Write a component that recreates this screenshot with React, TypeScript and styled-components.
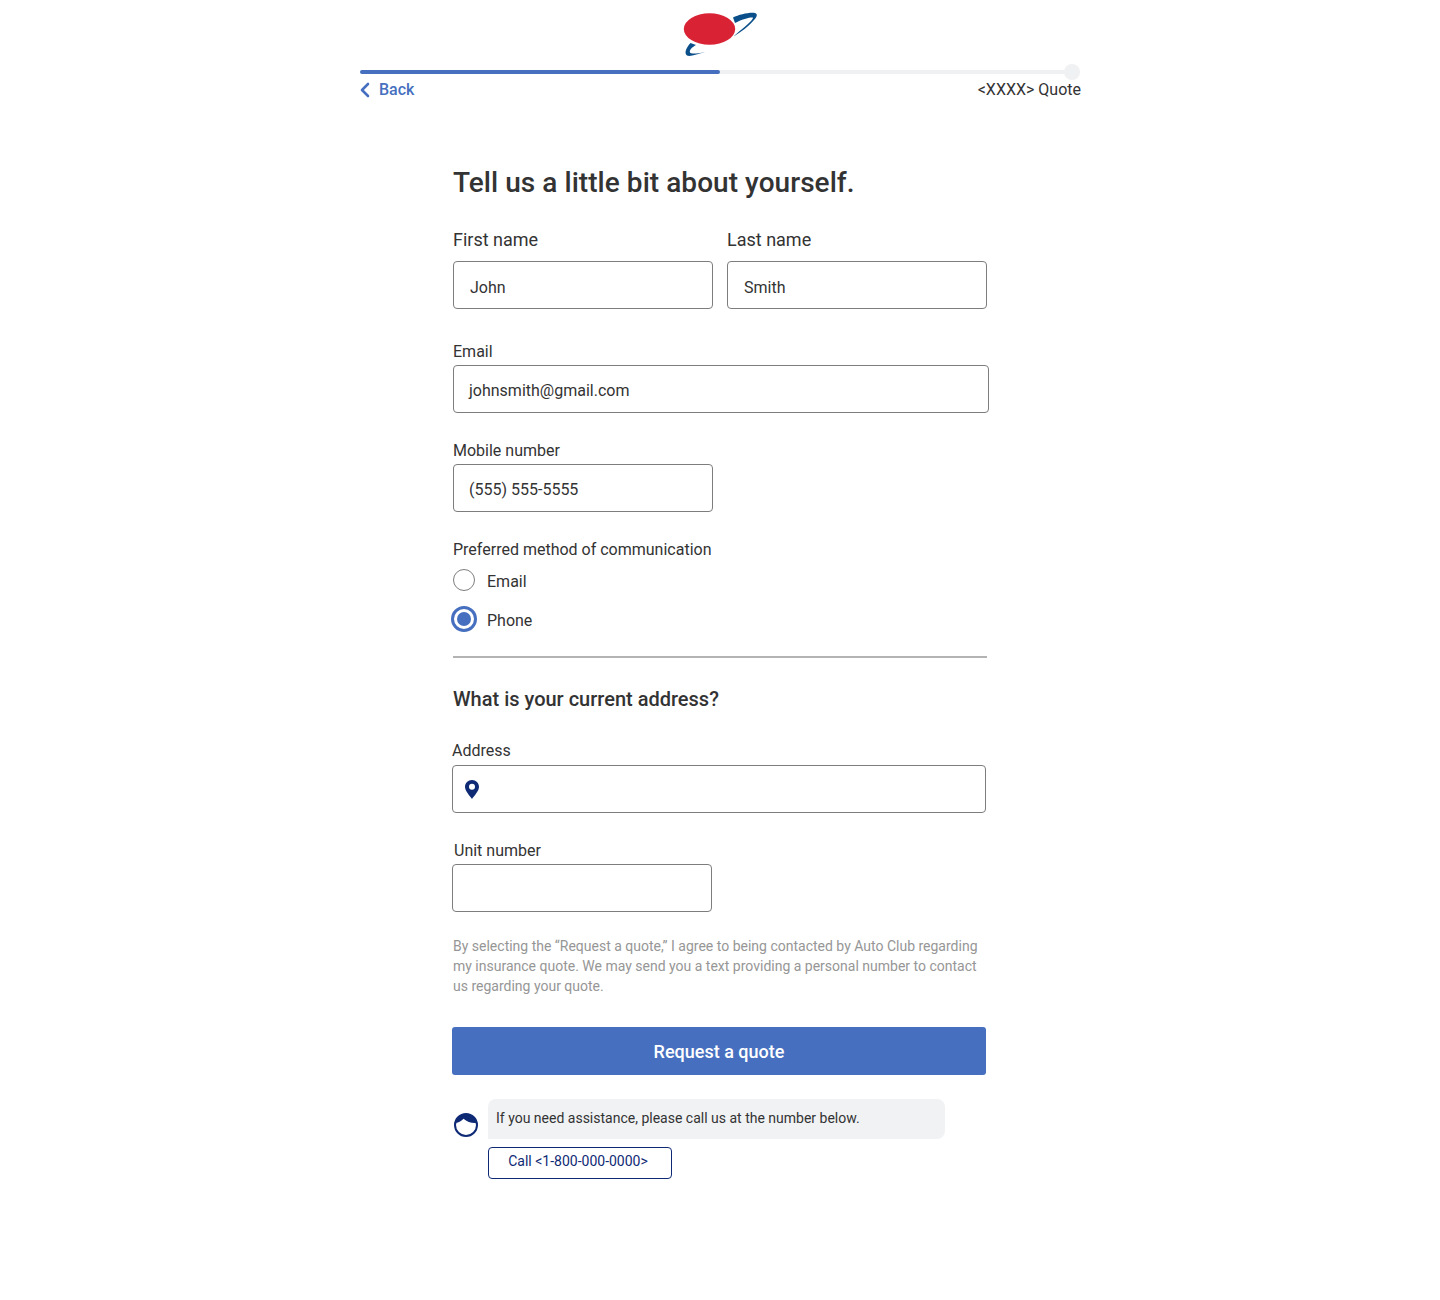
import React from "react";
import styled, { createGlobalStyle } from "styled-components";

const Global = createGlobalStyle`
  html, body { margin: 0; padding: 0; background: #fff; }
  body { font-family: Roboto, "Liberation Sans", sans-serif; color: #333; -webkit-font-smoothing: antialiased; }
`;

const Page = styled.div`
  width: 1440px;
  height: 1300px;
  display: flex;
  flex-direction: column;
  align-items: center;
`;
const Header = styled.header`
  width: 721px;
  margin-left: 1px;
  display: flex;
  flex-direction: column;
`;
const LogoRow = styled.div`
  height: 70px;
  display: flex;
  justify-content: center;
  padding-top: 12px;
  box-sizing: border-box;
`;
const Progress = styled.div`
  position: relative;
  width: 720px;
  height: 4px;
  border-radius: 2px;
  background: #f0f1f2;
`;
const ProgressFill = styled.div<{ $pct: number }>`
  width: ${(p) => p.$pct}%;
  height: 100%;
  border-radius: 2px;
  background: #4670bf;
`;
const ProgressEnd = styled.span`
  position: absolute;
  right: 0;
  top: -6px;
  width: 16px;
  height: 16px;
  border-radius: 50%;
  background: #f0f1f2;
`;
const NavRow = styled.div`
  display: flex;
  justify-content: space-between;
  align-items: center;
  height: 22px;
  margin-top: 5px;
  font-size: 16px;
  line-height: 22px;
`;
const BackLink = styled.a`
  display: flex;
  align-items: center;
  gap: 9px;
  color: #4670bf;
  font-weight: 500;
`;
const QuoteLabel = styled.span`
  color: #333;
`;
const Form = styled.main`
  width: 536px;
  margin-left: 2px;
  display: flex;
  flex-direction: column;
  align-items: flex-start;
`;
const Title = styled.h1`
  margin: 64px 0 0;
  font-size: 28px;
  line-height: 36px;
  font-weight: 500;
  letter-spacing: 0.05px;
  color: #333;
`;
const NameRow = styled.div`
  margin-top: 29px;
  display: flex;
  gap: 14px;
`;
const Field = styled.div<{ $top?: number; $shift?: number }>`
  display: flex;
  flex-direction: column;
  margin-top: ${(p) => p.$top ?? 0}px;
  margin-left: ${(p) => p.$shift ?? 0}px;
`;
const Label = styled.label<{ $big?: boolean; $shift?: number }>`
  display: block;
  font-size: ${(p) => (p.$big ? 18 : 16)}px;
  line-height: 20px;
  height: 20px;
  margin-left: ${(p) => p.$shift ?? 0}px;
  color: #333;
`;
const Box = styled.div<{ $w: number; $top?: number; $pad?: number; $drop?: number }>`
  width: ${(p) => p.$w}px;
  height: 48px;
  margin-top: ${(p) => p.$top ?? 3}px;
  padding-left: ${(p) => p.$pad ?? 15}px;
  padding-top: ${(p) => p.$drop ?? 0}px;
  box-sizing: border-box;
  border: 1px solid #7d7d7d;
  border-radius: 4px;
  display: flex;
  align-items: center;
  font-size: 16px;
  color: #333;
`;
const Radios = styled.div`
  margin-top: 8px;
  display: flex;
  flex-direction: column;
  gap: 15px;
`;
const RadioRow = styled.div<{ $on?: boolean }>`
  display: flex;
  align-items: center;
  height: ${(p) => (p.$on ? 26 : 23)}px;
  font-size: 16px;
  gap: ${(p) => (p.$on ? 10 : 12)}px;
  margin-left: ${(p) => (p.$on ? -2 : 0)}px;
`;
const RadioText = styled.span<{ $drop: number }>`
  padding-top: ${(p) => p.$drop}px;
`;
const RadioOff = styled.span`
  width: 22px;
  height: 22px;
  box-sizing: border-box;
  border: 1px solid #7d7d7d;
  border-radius: 50%;
`;
const RadioOn = styled.span`
  width: 26px;
  height: 26px;
  box-sizing: border-box;
  border: 3px solid #4670bf;
  border-radius: 50%;
  display: flex;
  align-items: center;
  justify-content: center;
  &::after {
    content: "";
    width: 14px;
    height: 14px;
    border-radius: 50%;
    background: #4670bf;
  }
`;
const Divider = styled.hr`
  width: 534px;
  height: 2px;
  margin: 24px 0 0;
  border: 0;
  background: #b3b3b3;
`;
const Subtitle = styled.h2`
  margin: 28px 0 0;
  font-size: 20px;
  line-height: 26px;
  font-weight: 500;
  color: #333;
`;
const Legal = styled.p`
  width: 534px;
  margin: 24px 0 0;
  font-size: 14px;
  line-height: 20px;
  color: #969696;
`;
const PrimaryButton = styled.button`
  width: 534px;
  height: 48px;
  margin: 31px 0 0 -1px;
  border: 0;
  border-radius: 3px;
  background: #4670bf;
  color: #fff;
  font-family: inherit;
  font-size: 18px;
  font-weight: 500;
`;
const Chat = styled.div`
  margin: 24px 0 0 1px;
  display: grid;
  grid-template-columns: 24px auto;
  column-gap: 10px;
  row-gap: 8px;
`;
const Avatar = styled.svg`
  width: 24px;
  height: 24px;
  margin-top: 14px;
`;
const Bubble = styled.div`
  width: 457px;
  height: 40px;
  padding: 0 0 2px 8px;
  box-sizing: border-box;
  display: flex;
  align-items: center;
  background: #f1f2f4;
  border-radius: 8px 8px 8px 0;
  font-size: 14px;
  color: #333;
`;
const CallButton = styled.button`
  grid-column: 2;
  width: 184px;
  height: 32px;
  padding: 0 4px 4px 0;
  box-sizing: border-box;
  background: #fff;
  border: 1px solid #0f2a75;
  border-radius: 4px;
  color: #0f2a75;
  font-family: inherit;
  font-size: 14px;
`;

const Logo = () => (
  <svg width="75" height="46" viewBox="0 0 75 46" aria-hidden="true">
    <path d="M50 5.500C56 2.500 67 0 72 1 75 2 74 5 71 8 66 14 58 20 50 25 57 18 68 11 70 6 71 5 66 5 60 7.500 57 8.500 54 10 52 11Z" fill="#0b4f8a" />
    <path d="M7.500 31C3 36 1 41 4 43.500 7 45 15 42 22 40 15 41.500 8 42.500 7 40.500 6 38 9.500 35 13 33Z" fill="#0b4f8a" />
    <ellipse cx="26.500" cy="17" rx="25.700" ry="15.700" fill="#d92335" />
  </svg>
);

export default function App() {
  return (
    <Page>
      <Global />
      <Header>
        <LogoRow>
          <Logo />
        </LogoRow>
        <Progress>
          <ProgressFill $pct={50} />
          <ProgressEnd />
        </Progress>
        <NavRow>
          <BackLink>
            <svg width="10" height="16" viewBox="0 0 10 16" aria-hidden="true">
              <path d="M8 2 2 8 8 14" fill="none" stroke="#4670bf" strokeWidth="2.600" strokeLinecap="round" strokeLinejoin="round" />
            </svg>
            Back
          </BackLink>
          <QuoteLabel>&lt;XXXX&gt; Quote</QuoteLabel>
        </NavRow>
      </Header>
      <Form>
        <Title>Tell us a little bit about yourself.</Title>
        <NameRow>
          <Field>
            <Label $big>First name</Label>
            <Box $w={260} $top={11} $pad={16} $drop={4}>John</Box>
          </Field>
          <Field>
            <Label $big>Last name</Label>
            <Box $w={260} $top={11} $pad={16} $drop={4}>Smith</Box>
          </Field>
        </NameRow>
        <Field $top={33}>
          <Label>Email</Label>
          <Box $w={536} $drop={2}>johnsmith@gmail.com</Box>
        </Field>
        <Field $top={28}>
          <Label>Mobile number</Label>
          <Box $w={260} $drop={2}>(555) 555-5555</Box>
        </Field>
        <Field $top={28}>
          <Label>Preferred method of communication</Label>
          <Radios>
            <RadioRow>
              <RadioOff />
              <RadioText $drop={3}>Email</RadioText>
            </RadioRow>
            <RadioRow $on>
              <RadioOn />
              <RadioText $drop={2}>Phone</RadioText>
            </RadioRow>
          </Radios>
        </Field>
        <Divider />
        <Subtitle>What is your current address?</Subtitle>
        <Field $top={29} $shift={-1}>
          <Label>Address</Label>
          <Box $w={534} $top={4} $pad={12}>
            <svg width="14" height="19" viewBox="0 0 14 19" aria-hidden="true">
              <path fillRule="evenodd" d="M7 0C3.100 0 0 3 0 6.800 0 11 4.500 15.500 7 19 9.500 15.500 14 11 14 6.800 14 3 10.900 0 7 0ZM7 3.800A3 3 0 1 1 7 9.800 3 3 0 0 1 7 3.800Z" fill="#0f2a75" />
            </svg>
          </Box>
        </Field>
        <Field $top={28} $shift={-1}>
          <Label $shift={2}>Unit number</Label>
          <Box $w={260} />
        </Field>
        <Legal>
          By selecting the “Request a quote,” I agree to being contacted by Auto Club regarding my insurance quote. We may send you a text providing a personal number to contact us regarding your quote.
        </Legal>
        <PrimaryButton>Request a quote</PrimaryButton>
        <Chat>
          <Avatar viewBox="0 0 24 24" aria-hidden="true">
            <circle cx="12" cy="12" r="11" fill="#fff" stroke="#0f2a75" strokeWidth="2" />
            <path d="M1.500 10C3 4 7 1 12 1 17 1 21 4 22.500 10 18 10.500 13 9 9.500 5.800 7.500 8 5 9.500 1.500 10Z" fill="#0f2a75" />
          </Avatar>
          <Bubble>If you need assistance, please call us at the number below.</Bubble>
          <CallButton>Call &lt;1-800-000-0000&gt;</CallButton>
        </Chat>
      </Form>
    </Page>
  );
}
